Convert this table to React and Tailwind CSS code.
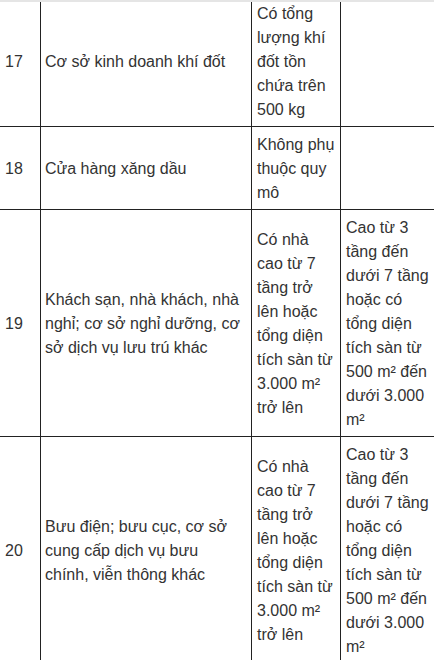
import React from "react";

const rows = [
  {
    n: "17",
    name: "Cơ sở kinh doanh khí đốt",
    a: "Có tổng lượng khí đốt tồn chứa trên 500 kg",
    b: "",
  },
  {
    n: "18",
    name: "Cửa hàng xăng dầu",
    a: "Không phụ thuộc quy mô",
    b: "",
  },
  {
    n: "19",
    name: "Khách sạn, nhà khách, nhà nghỉ; cơ sở nghỉ dưỡng, cơ sở dịch vụ lưu trú khác",
    a: "Có nhà cao từ 7 tầng trở lên hoặc tổng diện tích sàn từ 3.000 m² trở lên",
    b: "Cao từ 3 tầng đến dưới 7 tầng hoặc có tổng diện tích sàn từ 500 m² đến dưới 3.000 m²",
  },
  {
    n: "20",
    name: "Bưu điện; bưu cục, cơ sở cung cấp dịch vụ bưu chính, viễn thông khác",
    a: "Có nhà cao từ 7 tầng trở lên hoặc tổng diện tích sàn từ 3.000 m² trở lên",
    b: "Cao từ 3 tầng đến dưới 7 tầng hoặc có tổng diện tích sàn từ 500 m² đến dưới 3.000 m²",
  },
];

export default function App() {
  return (
    <div
      className="w-[434px] h-[660px] overflow-hidden bg-white border-t-2 border-[#e5e5e5] text-[#333] text-[16px] leading-[24px]"
      style={{ fontFamily: '"Liberation Sans", Arial, sans-serif' }}
    >
      <div className="w-[436px] -mt-[6px]">
        {rows.map((r) => (
          <div
            key={r.n}
            className="grid grid-cols-[41px_211px_89px_95px] border-b border-[#222]"
          >
            <div className="flex flex-col justify-center border-r border-[#222] pl-[5px] pr-[4px] pt-[6px] pb-[4px]">
              {r.n}
            </div>
            <div className="flex flex-col justify-center border-r border-[#222] pl-[4px] pr-[5px] pt-[6px] pb-[4px]">
              {r.name}
            </div>
            <div className="flex flex-col justify-center border-r border-[#222] px-[5px] pt-[6px] pb-[4px]">
              {r.a}
            </div>
            <div className="flex flex-col justify-center border-r border-[#222] px-[5px] pt-[6px] pb-[4px]">
              {r.b}
            </div>
          </div>
        ))}
      </div>
    </div>
  );
}
